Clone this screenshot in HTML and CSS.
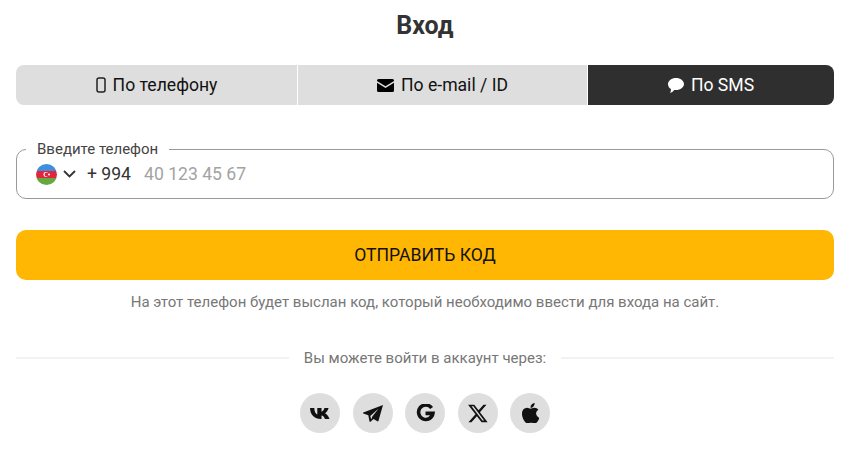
FILE: index.html
```html
<!DOCTYPE html>
<html>
<head lang="ru">
    <meta charset="UTF-8">
    <title>Вход</title>
    <link rel="stylesheet" href="styles.css">
</head>
<body>
    <div class="login">
        <h1 class="title">Вход</h1>

        <div class="tabs">
            <div class="tab tab-phone">
                <svg width="10" height="16" viewBox="0 0 10 16"><rect x="1" y="1" width="8" height="14" rx="2" fill="none" stroke="#222" stroke-width="1.500"/></svg>
                По телефону
            </div>
            <div class="tab tab-email">
                <svg width="17" height="13" viewBox="0 0 17 13"><path fill="#000" d="M1.500 0h14A1.500 1.500 0 0 1 17 1.500v.4L8.500 7.300 0 1.900v-.4A1.500 1.500 0 0 1 1.500 0zM0 3.700l8.500 5.400L17 3.700v7.800a1.500 1.500 0 0 1-1.500 1.500h-14A1.500 1.500 0 0 1 0 11.500z"/></svg>
                По e-mail / ID
            </div>
            <div class="tab tab-sms active">
                <svg width="16" height="15" viewBox="0 0 16 15"><path fill="#fff" d="M8 0c4.400 0 8 2.700 8 6s-3.600 6-8 6c-.6 0-1.200 0-1.800-.1C5.200 13.300 3.500 14.500 2 15c.7-1 1-2.300 1-3.900C1.200 10 0 8.100 0 6c0-3.300 3.600-6 8-6z"/></svg>
                По SMS
            </div>
        </div>

        <div class="field">
            <span class="field-label">Введите телефон</span>
            <svg class="flag" width="21" height="21" viewBox="0 0 21 21">
                <clipPath id="flag-clip"><circle cx="10.500" cy="10.500" r="10.500"/></clipPath>
                <g clip-path="url(#flag-clip)">
                    <rect width="21" height="7" fill="#3f8fdc"/>
                    <rect y="7" width="21" height="7" fill="#e0263c"/>
                    <rect y="14" width="21" height="7" fill="#64a83f"/>
                    <circle cx="9.800" cy="10.500" r="2.400" fill="#fff"/>
                    <circle cx="10.500" cy="10.500" r="1.900" fill="#e0263c"/>
                    <circle cx="13" cy="10.500" r="1" fill="#fff"/>
                </g>
            </svg>
            <svg class="chevron" width="13" height="8" viewBox="0 0 13 8"><path d="M1 1l5.500 5.500L12 1" fill="none" stroke="#333" stroke-width="1.800"/></svg>
            <span class="code">+ 994</span>
            <span class="placeholder">40 123 45 67</span>
        </div>

        <div class="submit">ОТПРАВИТЬ КОД</div>
        <p class="hint">На этот телефон будет выслан код, который необходимо ввести для входа на сайт.</p>

        <div class="divider">
            <span class="divider-line"></span>
            <span class="divider-text">Вы можете войти в аккаунт через:</span>
            <span class="divider-line"></span>
        </div>

        <div class="socials">
            <div class="social"><svg width="20" height="11" viewBox="0 0 20 11"><path fill="#111" d="M11 11C4.300 11 .3 6.900 0 0h4.300c.2 4.300 1.800 6 3 6.400V0h4.200v3.700c1.200-.1 2.400-1.600 2.900-3.700h4.200c-.6 2.700-2.400 4.500-3.500 5.300 1.100.7 3.300 2.300 4.400 5.700h-4.500c-.7-1.900-2-3.300-3.500-3.500V11z"/></svg></div>
            <div class="social"><svg width="20" height="17" viewBox="0 0 20 17"><path fill="#111" d="M20 0 .3 7.500c-.4.200-.4.700 0 .9l5 1.800 1.200 6.200c.1.500.6.600 1 .3l3.100-2.800 3.800 2.400c.4.300 1 0 1.100-.5zM7.300 10.900l8.300-7.300-6.300 8-1 2.800z"/></svg></div>
            <div class="social"><svg width="19" height="18" viewBox="0 0 19 18"><path fill="none" stroke="#111" stroke-width="3.600" d="M15.600 4A7.200 7.200 0 1 0 16.900 9.400H9.500"/></svg></div>
            <div class="social"><svg width="20" height="19" viewBox="1.200 2.200 22 19.600"><path fill="#111" d="M18.244 2.250h3.308l-7.227 8.260 8.502 11.240H16.170l-5.214-6.817L4.990 21.750H1.680l7.730-8.835L1.254 2.250H8.080l4.713 6.231zm-1.161 17.520h1.833L7.084 4.126H5.117z"/></svg></div>
            <div class="social"><svg width="17" height="20" viewBox="0 0 17 20"><path fill="#111" d="M14.100 10.600c0-1.700.8-2.900 2.300-3.900-.9-1.200-2.200-1.900-3.900-2-1.600-.1-3.400 1-4 1-.7 0-2.200-1-3.500-1C2.400 4.800 0 6.800 0 10.900c0 1.200.2 2.500.7 3.800.6 1.700 2.800 5.900 5 5.800 1.200 0 2-.8 3.500-.8s2.200.8 3.500.8c2.200 0 4.100-3.800 4.700-5.500-2.900-1.400-3.300-4.100-3.300-4.400zM11.600 3.200C12.800 1.800 12.700.5 12.600 0c-1.100.1-2.300.7-3 1.600-.8.900-1.200 2-1.100 3.200 1.200.1 2.300-.5 3.100-1.600z"/></svg></div>
        </div>
    </div>
</body>
</html>
```

FILE: styles.css
```css
* {
    box-sizing: border-box;
}
body {
    margin: 0;
    background-color: #fff;
    font-family: Roboto, "Noto Sans", sans-serif;
    color: #111;
}
.login {
    padding: 12px 19px 0 16px;
}
.title {
    margin: 0;
    height: 28px;
    font-size: 25px;
    line-height: 28px;
    font-weight: 700;
    color: #333;
    text-align: center;
}
.tabs {
    display: flex;
    height: 40px;
    margin-top: 25px;
    gap: 1px;
}
.tab {
    display: flex;
    align-items: center;
    justify-content: center;
    gap: 7px;
    background-color: #dedede;
    font-size: 17.6px;
}
.tab-phone {
    width: 281px;
    border-radius: 8px 0 0 8px;
}
.tab-email {
    width: 289px;
}
.tab-sms {
    flex: 1;
    border-radius: 0 8px 8px 0;
}
.tab.active {
    background-color: #2f2f2f;
    color: #fff;
}
.field {
    position: relative;
    display: flex;
    align-items: center;
    height: 50px;
    margin-top: 44px;
    padding-left: 19px;
    border: 1px solid #999;
    border-radius: 10px;
}
.field-label {
    position: absolute;
    top: -9px;
    left: 9px;
    padding: 0 11px;
    background-color: #fff;
    font-size: 15px;
    line-height: 16px;
    color: #444;
}
.chevron {
    margin-left: 6px;
}
.code {
    margin-left: 11px;
    font-size: 17.6px;
    color: #333;
}
.placeholder {
    margin-left: 13px;
    font-size: 17.6px;
    color: #a3a3a3;
}
.submit {
    height: 50px;
    margin-top: 31px;
    border-radius: 10px;
    background-color: #ffb703;
    font-size: 17.6px;
    line-height: 50px;
    text-align: center;
}
.hint {
    margin: 13px 0 0;
    font-size: 15px;
    line-height: 18px;
    color: #777;
    text-align: center;
}
.divider {
    display: flex;
    align-items: center;
    gap: 15px;
    margin-top: 38px;
}
.divider-line {
    flex: 1;
    height: 2px;
    background-color: #f2f2f2;
}
.divider-text {
    font-size: 15px;
    line-height: 18px;
    color: #777;
}
.socials {
    display: flex;
    justify-content: center;
    gap: 12.5px;
    margin-top: 26px;
}
.social {
    display: flex;
    align-items: center;
    justify-content: center;
    width: 40px;
    height: 40px;
    border-radius: 50%;
    background-color: #dedede;
}
```
